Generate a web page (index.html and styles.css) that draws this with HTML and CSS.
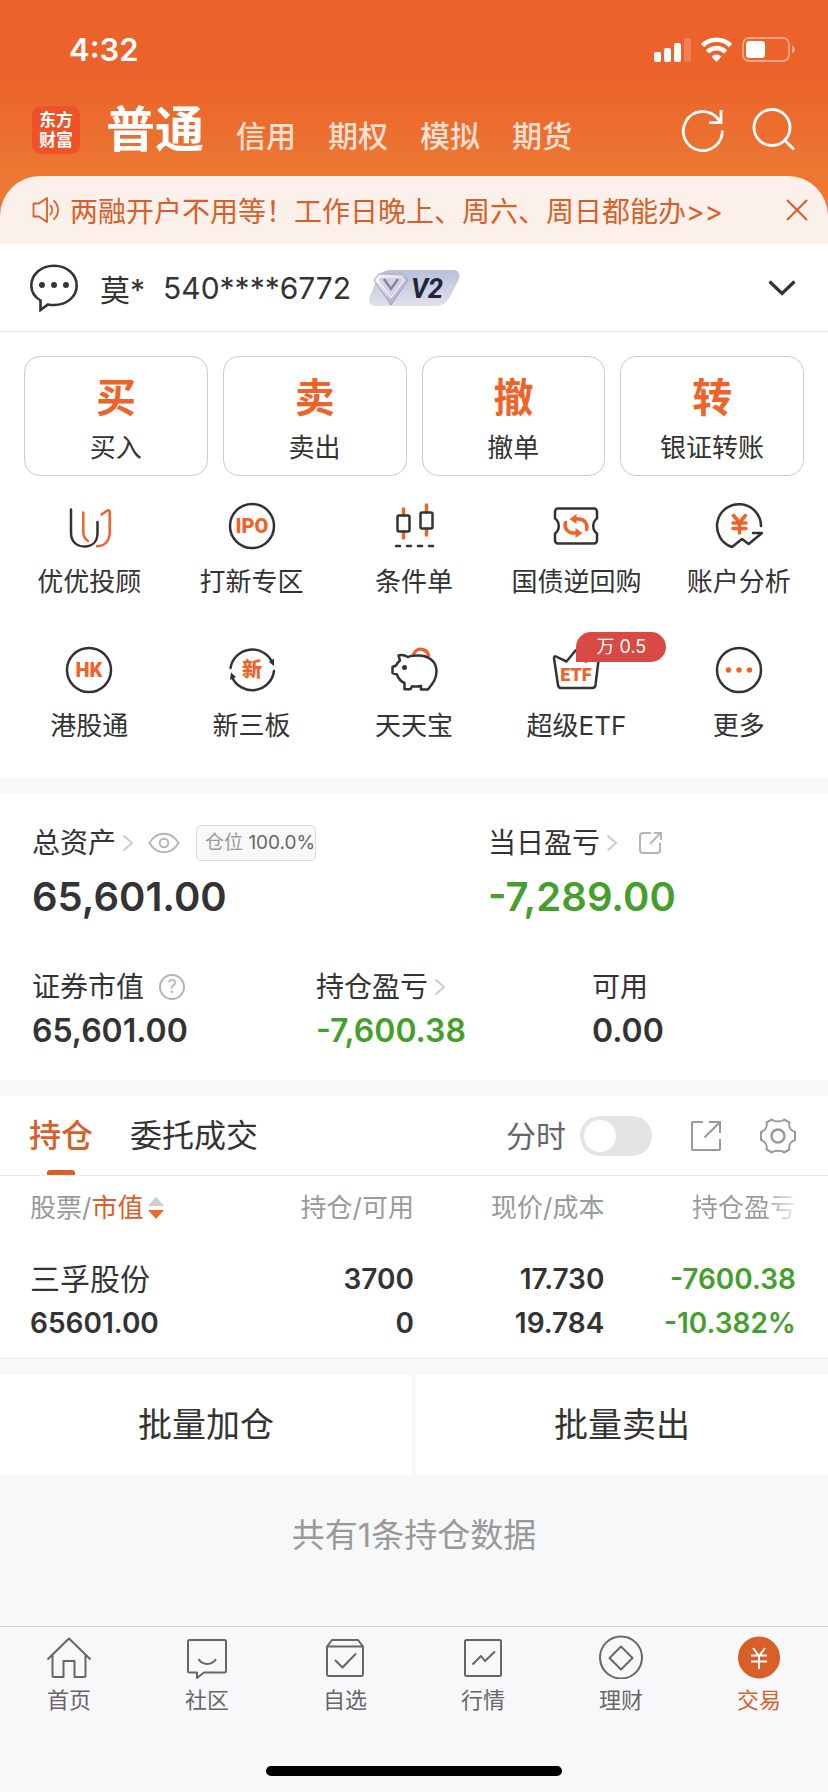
FILE: index.html
```html
<!DOCTYPE html>
<html lang="zh-CN">
<head>
    <meta charset="UTF-8">
    <meta name="viewport" content="width=device-width, initial-scale=1.0">
    <title>交易</title>
    <link rel="stylesheet" href="styles.css">
</head>
<body>
    <header class="header">
        <div class="status-bar">
            <span class="time">4:32</span>
            <svg class="status-icons" width="142" height="26" viewBox="0 0 142 26" fill="#fff">
                <rect x="0" y="15" width="7" height="10" rx="2"/>
                <rect x="10" y="11" width="7" height="14" rx="2"/>
                <rect x="20" y="6" width="7" height="19" rx="2"/>
                <rect x="30" y="1" width="7" height="24" rx="2" opacity=".2"/>
                <g fill="none" stroke="#fff" stroke-width="4.6">
                    <path d="M48.500 8.500a20 20 0 0 1 28 0"/>
                    <path d="M53.500 15a12.500 12.500 0 0 1 18 0"/>
                </g>
                <path d="M62.500 25l-5-5.500a7.500 7.500 0 0 1 10 0z"/>
                <rect x="89" y="1" width="46" height="23" rx="6" fill="none" stroke="#fff" stroke-width="1.800" opacity=".42"/>
                <rect x="92" y="4" width="19" height="17" rx="3.500"/>
                <path d="M138 8.500c4 1.500 4 6.500 0 8z" opacity=".45"/>
            </svg>
        </div>
        <div class="title-bar">
            <a class="logo" href="#">东方<br>财富</a>
            <nav class="modes">
                <a class="mode active" href="#">普通</a>
                <a class="mode" href="#">信用</a>
                <a class="mode" href="#">期权</a>
                <a class="mode" href="#">模拟</a>
                <a class="mode" href="#">期货</a>
            </nav>
            <button class="icon-btn" aria-label="刷新">
                <svg width="44" height="44" viewBox="0 0 44 44" fill="none" stroke="#fff" stroke-width="2.800">
                    <path d="M41.300 22.500A19.500 19.500 0 1 1 35.800 9.500L39 13"/>
                    <path d="M40 2v12.600H28"/>
                </svg>
            </button>
            <button class="icon-btn" aria-label="搜索">
                <svg width="44" height="44" viewBox="0 0 44 44" fill="none" stroke="#fff" stroke-width="2.800">
                    <circle cx="21" cy="19.500" r="18"/>
                    <path d="M33.500 32l9.500 9.500"/>
                </svg>
            </button>
        </div>
        <div class="notice">
            <svg width="28" height="28" viewBox="0 0 28 28" fill="none" stroke="#d85f28" stroke-width="1.800">
                <path d="M1.500 7.500h5.500l8-5.500v24l-8-5.500H1.500z" stroke-linejoin="round"/>
                <path d="M18 9c3 3 3 7 0 10M21.500 4.500c6 5 6 14 0 19"/>
            </svg>
            <a class="notice-text" href="#">两融开户不用等！工作日晚上、周六、周日都能办&gt;&gt;</a>
            <button class="close-btn" aria-label="关闭">
                <svg width="22" height="22" viewBox="0 0 22 22" stroke="#d85f28" stroke-width="2"><path d="M1 1l20 20M21 1L1 21"/></svg>
            </button>
        </div>
    </header>

    <main>
        <section class="account">
            <svg width="48" height="48" viewBox="0 0 48 48">
                <path d="M10.500 46V36.500C4.500 33 1.300 27.500 1.300 21.500 1.300 10.500 11 1.800 24 1.800s22.700 8.700 22.700 19.700S37 41 24 41c-2.500 0-4-.2-6-.6z" fill="none" stroke="#333" stroke-width="2.600"/>
                <g fill="#333"><circle cx="12" cy="21" r="3"/><circle cx="24" cy="21" r="3"/><circle cx="36" cy="21" r="3"/></g>
            </svg>
            <span class="name">莫*</span>
            <span class="number">540****6772</span>
            <svg class="level" width="92" height="36" viewBox="0 0 92 36">
                <defs>
                    <linearGradient id="lv" x1="0" y1="0" x2="0" y2="1">
                        <stop offset="0" stop-color="#b9c0da"/>
                        <stop offset="1" stop-color="#dfe1ea"/>
                    </linearGradient>
                    <linearGradient id="gem" x1="0" y1="0" x2="1" y2="1">
                        <stop offset="0" stop-color="#fff"/>
                        <stop offset="1" stop-color="#9d94bd"/>
                    </linearGradient>
                </defs>
                <path d="M22 0h62c6 0 8 5 5 11l-6 12c-4 9-9 13-17 13H6c-5 0-7-5-5-10L8 9C11 3 15 0 22 0z" fill="url(#lv)"/>
                <path d="M10 4h24l5 6-17 25L5 10z" fill="url(#gem)" stroke="#a19cb8" stroke-width="1"/>
                <path d="M12 7h20l3 3-13 18L9 10z" fill="#d3d1e3" stroke="#fff" stroke-width="1"/>
                <path d="M15 9l7 10 7-10" fill="none" stroke="#8481a3" stroke-width="2.400"/>
                <text class="level-text" x="42" y="28">V2</text>
            </svg>
            <button class="expand-btn" aria-label="展开">
                <svg width="28" height="18" viewBox="0 0 28 18" fill="none" stroke="#333" stroke-width="3.200"><path d="M1.500 2.500L14 14.500 26.500 2.500"/></svg>
            </button>
        </section>

        <section class="actions">
            <button class="action"><b>买</b><span>买入</span></button>
            <button class="action"><b>卖</b><span>卖出</span></button>
            <button class="action"><b>撤</b><span>撤单</span></button>
            <button class="action"><b>转</b><span>银证转账</span></button>
        </section>

        <section class="services">
            <a class="service" href="#">
                <svg class="line-icon" viewBox="0 0 48 48">
                    <path d="M6 7.500v23.500c0 8 5 13.500 13.500 13.500S32.500 39 32.500 31V20"/>
                    <path class="accent" d="M18.300 10.500V30c0 4 1.500 7 4.700 9M36.500 12.500L42 8.700c1.500-1 2.700-.3 2.700 1.300v20c0 9-5 14.200-12.700 14.200"/>
                </svg>
                <span>优优投顾</span>
            </a>
            <a class="service" href="#">
                <svg class="line-icon" viewBox="0 0 48 48">
                    <circle cx="24" cy="24" r="22"/>
                    <text x="24" y="31">IPO</text>
                </svg>
                <span>打新专区</span>
            </a>
            <a class="service" href="#">
                <svg class="line-icon" viewBox="0 0 48 48">
                    <path class="accent thick" d="M13.500 7v6M13.500 30v6M36.500 3v7M36.500 27v6"/>
                    <rect x="7.500" y="13.500" width="12" height="16" rx="1.500"/>
                    <rect x="30.500" y="10.500" width="12" height="16" rx="1.500"/>
                    <path d="M6 44h4M17 44h4M28 44h4M39 44h4"/>
                </svg>
                <span>条件单</span>
            </a>
            <a class="service" href="#">
                <svg class="line-icon" viewBox="0 0 48 48">
                    <path d="M6 6.500h36a3 3 0 0 1 3 3v7c-5 3.500-5 11.500 0 15v7a3 3 0 0 1-3 3H6a3 3 0 0 1-3-3v-7c5-3.500 5-11.500 0-15v-7a3 3 0 0 1 3-3z"/>
                    <path class="accent thick" d="M13.500 20.500c-1.500 5 1.500 10.500 8 10.500h4M34.500 27.500c1.500-5-1.500-10.500-8-10.500h-4"/>
                    <path class="fill" d="M24.500 12v10l-7-5zM23.500 26v10l7-5z"/>
                </svg>
                <span>国债逆回购</span>
            </a>
            <a class="service" href="#">
                <svg class="line-icon" viewBox="0 0 48 48">
                    <path d="M46 24A22 22 0 1 0 17 45l10-8 6.700 5L47 31h-9"/>
                    <path class="accent thick" d="M18.500 13.500l6 7 6-7M24.500 20.500V31M18 21h13M18 26.500h13"/>
                </svg>
                <span>账户分析</span>
            </a>
            <a class="service" href="#">
                <svg class="line-icon" viewBox="0 0 48 48">
                    <circle cx="24" cy="24" r="22"/>
                    <text x="24" y="31">HK</text>
                </svg>
                <span>港股通</span>
            </a>
            <a class="service" href="#">
                <svg class="line-icon" viewBox="0 0 48 48">
                    <path d="M2.500 22A22 22 0 0 1 44.500 17M46 25A22 22 0 0 1 4 31"/>
                    <path class="fill-dark" d="M41 16l5-3.500V20zM2 34l1-7.500L8 31z"/>
                    <text class="cjk" x="24" y="31">新</text>
                </svg>
                <span>新三板</span>
            </a>
            <a class="service" href="#">
                <svg class="line-icon" viewBox="0 0 48 48">
                    <path class="accent thick" d="M23.500 8.500c2-5 6-6 9-5 3.500.8 5.500 3 6 6"/>
                    <path d="M8.500 9.500c4-1.500 7 0 9.500 1.500 3-1.500 6-1.500 10-1.500 11 0 18.500 6 18.500 15.500 0 8-3.500 12-8.500 18.500h-7v-3.500c-3 .6-6 .6-9 .3l-1.500 3h-6V37C10 35 8 31.500 7 28.500l-4.500-1.500v-6l3.500-1.500c1-2 2-3.500 4-5z"/>
                    <circle class="fill-dark" cx="14.500" cy="21.500" r="2.500"/>
                </svg>
                <span>天天宝</span>
            </a>
            <a class="service" href="#">
                <svg class="line-icon" viewBox="0 0 48 48">
                    <path d="M2 12c0-1.500 1-2 2-1.500L14.500 15.500 24 4l9.500 11.500L45 10.500c1-.5 2 .5 1.800 1.500l-3.300 27c-.3 2-1.300 3-3 3H9c-1.700 0-2.700-1-3-3z"/>
                    <text class="small" x="24" y="35">ETF</text>
                </svg>
                <em class="badge">万 0.5</em>
                <span>超级ETF</span>
            </a>
            <a class="service" href="#">
                <svg class="line-icon" viewBox="0 0 48 48">
                    <circle cx="24" cy="24" r="22"/>
                    <g class="fill"><circle cx="13.500" cy="24" r="2.700"/><circle cx="24" cy="24" r="2.700"/><circle cx="34.500" cy="24" r="2.700"/></g>
                </svg>
                <span>更多</span>
            </a>
        </section>

        <section class="assets">
            <div class="asset-row total">
                <div class="asset">
                    <div class="asset-label">
                        <a href="#">总资产</a>
                        <svg class="arrow" viewBox="0 0 12 18"><path d="M1.500 1.500L10 9l-8.500 7.500"/></svg>
                        <button class="eye-btn" aria-label="隐藏资产">
                            <svg width="32" height="22" viewBox="0 0 32 22" fill="none" stroke="#b5b5b5" stroke-width="2">
                                <path d="M1.500 11C5 5 10 1.800 16 1.800S27 5 30.500 11C27 17 22 20.200 16 20.200S5 17 1.500 11z"/>
                                <circle cx="16" cy="11" r="4.300"/>
                            </svg>
                        </button>
                        <span class="position">仓位 <i>100.0%</i></span>
                    </div>
                    <div class="value">65,601.00</div>
                </div>
                <div class="asset">
                    <div class="asset-label">
                        <a href="#">当日盈亏</a>
                        <svg class="arrow" viewBox="0 0 12 18"><path d="M1.500 1.500L10 9l-8.500 7.500"/></svg>
                        <button class="share-btn" aria-label="分享">
                            <svg width="24" height="24" viewBox="0 0 24 24" fill="none" stroke="#b5b5b5" stroke-width="2">
                                <path d="M13 2H5a3 3 0 0 0-3 3v14a3 3 0 0 0 3 3h14a3 3 0 0 0 3-3v-7M16 2h7v7M22.500 2L12 13"/>
                            </svg>
                        </button>
                    </div>
                    <div class="value down">-7,289.00</div>
                </div>
            </div>
            <div class="asset-row detail">
                <div class="asset">
                    <div class="asset-label">
                        <span>证券市值</span>
                        <svg class="help" width="28" height="28" viewBox="0 0 28 28">
                            <circle cx="14" cy="14" r="12" fill="none" stroke="#b5b5b5" stroke-width="2"/>
                            <text x="14" y="20">?</text>
                        </svg>
                    </div>
                    <div class="value">65,601.00</div>
                </div>
                <div class="asset">
                    <div class="asset-label">
                        <a href="#">持仓盈亏</a>
                        <svg class="arrow" viewBox="0 0 12 18"><path d="M1.500 1.500L10 9l-8.500 7.500"/></svg>
                    </div>
                    <div class="value down">-7,600.38</div>
                </div>
                <div class="asset">
                    <div class="asset-label"><span>可用</span></div>
                    <div class="value">0.00</div>
                </div>
            </div>
        </section>

        <section class="holdings">
            <div class="tabs">
                <button class="tab active">持仓</button>
                <button class="tab">委托成交</button>
                <label class="minute" for="minute">分时</label>
                <input class="switch" type="checkbox" id="minute">
                <button class="tool" aria-label="导出">
                    <svg width="36" height="36" viewBox="0 0 36 36" fill="none" stroke="#999" stroke-width="2">
                        <path d="M15 4H5a1 1 0 0 0-1 1v26a1 1 0 0 0 1 1h26a1 1 0 0 0 1-1V21M21 4h11v11M32 4L16.500 19.500"/>
                    </svg>
                </button>
                <button class="tool" aria-label="设置">
                    <svg width="36" height="36" viewBox="0 0 36 36" fill="none" stroke="#999" stroke-width="2" stroke-linejoin="round">
                        <path d="M12 1.500c2 2.500 10 2.500 12 0l5.500 3c-1 4 1 8 5.500 9.500v8c-4.500 1.500-6.500 5.500-5.500 9.500L24 34.500c-2-2.500-10-2.500-12 0l-5.500-3c1-4-1-8-5.500-9.500v-8C5.500 12.500 7.500 8.500 6.500 4.500z"/>
                        <circle cx="18" cy="18" r="6.500" stroke-width="2.500"/>
                    </svg>
                </button>
            </div>
            <table class="stock-table">
                <thead>
                    <tr>
                        <th>股票/<span class="sorted">市值</span><svg class="sort" width="16" height="22" viewBox="0 0 16 22"><path d="M8 0l8 9H0z" fill="#ccc"/><path d="M8 22l8-9H0z" fill="#e96a2f"/></svg></th>
                        <th>持仓/可用</th>
                        <th>现价/成本</th>
                        <th><span class="fade">持仓盈亏</span></th>
                    </tr>
                </thead>
                <tbody>
                    <tr>
                        <td><span class="stock">三孚股份</span>65601.00</td>
                        <td>3700<br>0</td>
                        <td>17.730<br>19.784</td>
                        <td class="down">-7600.38<br>-10.382%</td>
                    </tr>
                </tbody>
            </table>
        </section>

        <div class="batch">
            <button>批量加仓</button>
            <button>批量卖出</button>
        </div>
        <p class="summary">共有1条持仓数据</p>
    </main>

    <footer class="footer">
        <nav class="tabbar">
            <a href="#">
                <svg class="nav-icon" viewBox="0 0 44 44"><path d="M.5 24.500L22 3.500l21.500 21M5.500 20v20.500a1.500 1.500 0 0 0 1.500 1.500h9.500V26h11v16H37a1.500 1.500 0 0 0 1.500-1.500V20"/></svg>
                <span>首页</span>
            </a>
            <a href="#">
                <svg class="nav-icon" viewBox="0 0 44 44"><path d="M4.500 5h35A1.500 1.500 0 0 1 41 6.500v29.500a1.500 1.500 0 0 1-1.500 1.500H19L12 43v-5.500H4.500A1.500 1.500 0 0 1 3 36V6.500A1.500 1.500 0 0 1 4.500 5zM13.500 24c4 6.500 13.500 6.500 17.500 0"/></svg>
                <span>社区</span>
            </a>
            <a href="#">
                <svg class="nav-icon" viewBox="0 0 44 44"><path d="M4 11.500h36V39a2 2 0 0 1-2 2H6a2 2 0 0 1-2-2zL9 5h26l5 6.500M12 25l7.500 7.500L33 18.500"/></svg>
                <span>自选</span>
            </a>
            <a href="#">
                <svg class="nav-icon" viewBox="0 0 44 44"><rect x="4" y="5" width="36" height="36" rx="1.500"/><path d="M11.500 29.500l8.500-8.500 4 5 10-9.500"/></svg>
                <span>行情</span>
            </a>
            <a href="#">
                <svg class="nav-icon" viewBox="0 0 44 44"><circle cx="22" cy="22.500" r="21"/><path d="M22 11.500l11.500 11.500L22 34.500 10.500 23z"/></svg>
                <span>理财</span>
            </a>
            <a class="active" href="#">
                <svg class="nav-icon" viewBox="0 0 44 44"><circle class="disc" cx="22" cy="22.500" r="20"/><path class="yen" d="M16 13l6 8 6-8M22 21v13M14 20.500h16M14 26.500h16"/></svg>
                <span>交易</span>
            </a>
        </nav>
        <div class="home-bar"></div>
    </footer>
</body>
</html>
```
FILE: styles.css
```css
* {
    box-sizing: border-box;
}
body {
    margin: 0;
    min-height: 100vh;
    display: flex;
    flex-direction: column;
    font-family: Inter, "Noto Sans CJK SC", sans-serif;
    font-size: 28px;
    color: #333;
    background-color: #f7f8fa;
}
a {
    color: inherit;
    text-decoration: none;
}
button {
    padding: 0;
    border: none;
    background: none;
    font: inherit;
    color: inherit;
}
svg {
    display: block;
    flex-shrink: 0;
}

/* header */
.header {
    background: linear-gradient(#eb622a 0, #eb622a 70px, #ec7833 176px);
}
.status-bar {
    display: flex;
    align-items: center;
    justify-content: space-between;
    height: 84px;
    padding: 16px 32px 0 69px;
}
.time {
    font-size: 31px;
    font-weight: 600;
    line-height: 40px;
    color: #fff;
}
.title-bar {
    display: flex;
    align-items: center;
    gap: 26px;
    height: 92px;
    padding: 0 33px 0 32px;
}
.logo {
    width: 48px;
    height: 48px;
    padding-top: 4px;
    border-radius: 9px;
    background-color: #ef5227;
    color: #fff;
    font-size: 17px;
    font-weight: 700;
    line-height: 20px;
    text-align: center;
}
.modes {
    flex: 1;
    display: flex;
    align-items: baseline;
    gap: 32px;
    padding-top: 6px;
}
.mode {
    font-size: 30px;
    font-weight: 500;
    line-height: 60px;
    color: rgba(255, 255, 255, 0.8);
}
.mode.active {
    font-size: 49px;
    font-weight: 700;
    color: #fff;
}
.notice {
    display: flex;
    align-items: center;
    height: 68px;
    padding: 0 20px 0 32px;
    border-radius: 40px 40px 0 0;
    background-color: #fcf0eb;
    color: #d85f28;
}
.notice-text {
    flex: 1;
    margin-left: 10px;
    white-space: nowrap;
}

/* account */
.account {
    display: flex;
    align-items: center;
    height: 88px;
    padding: 0 32px 0 30px;
    border-bottom: 1px solid #ebebeb;
    background-color: #fff;
    font-size: 30px;
}
.name {
    margin-left: 22px;
}
.number {
    margin: 0 18px;
}
.level-text {
    font-family: Roboto, sans-serif;
    font-size: 27px;
    font-weight: 700;
    font-style: italic;
    fill: #22263a;
}
.expand-btn {
    margin-left: auto;
}

/* buy, sell, cancel, transfer */
.actions {
    display: grid;
    grid-template-columns: repeat(4, 1fr);
    gap: 15px;
    padding: 24px 24px 0;
    background-color: #fff;
}
.action {
    display: flex;
    flex-direction: column;
    align-items: center;
    gap: 9px;
    height: 120px;
    padding-top: 18px;
    border: 1px solid #ccc;
    border-radius: 16px;
    font-size: 26px;
    line-height: 36px;
}
.action b {
    font-size: 40px;
    line-height: 46px;
    color: #ee6329;
}

/* services */
.services {
    display: grid;
    grid-template-columns: repeat(5, 1fr);
    row-gap: 46px;
    padding: 26px 8px 34px;
    background-color: #fff;
}
.service {
    position: relative;
    display: flex;
    flex-direction: column;
    align-items: center;
    gap: 14px;
    font-size: 26px;
    line-height: 36px;
    white-space: nowrap;
}
.line-icon {
    width: 48px;
    height: 48px;
    fill: none;
    stroke: #333;
    stroke-width: 2.5;
    stroke-linecap: round;
    stroke-linejoin: round;
}
.line-icon .accent {
    stroke: #ee6329;
}
.line-icon .thick {
    stroke-width: 3.5;
}
.line-icon .fill,
.line-icon text {
    fill: #ee6329;
    stroke: none;
}
.line-icon .fill-dark {
    fill: #333;
    stroke: none;
}
.line-icon text {
    font-family: Roboto, sans-serif;
    font-size: 20px;
    font-weight: 900;
    text-anchor: middle;
}
.line-icon .small {
    font-size: 18px;
}
.line-icon .cjk {
    font-family: "Noto Sans CJK SC", sans-serif;
}
.badge {
    position: absolute;
    top: -14px;
    left: 50%;
    width: 90px;
    border-radius: 15px 15px 15px 0;
    background-color: #d84a43;
    color: #fff;
    font-size: 18px;
    font-style: normal;
    line-height: 30px;
    text-align: center;
}

/* assets */
.assets {
    margin-top: 16px;
    padding: 27px 32px;
    background-color: #fff;
}
.asset-row {
    display: grid;
}
.total {
    grid-template-columns: 456fr 308fr;
    margin-bottom: 44px;
}
.detail {
    grid-template-columns: 284fr 276fr 204fr;
}
.asset-label {
    display: flex;
    align-items: center;
    height: 44px;
    line-height: 44px;
}
.arrow {
    width: 12px;
    height: 18px;
    margin-left: 6px;
    fill: none;
    stroke: #ccc;
    stroke-width: 2;
}
.eye-btn {
    margin-left: 14px;
}
.share-btn {
    margin-left: 20px;
}
.help {
    margin-left: 14px;
}
.help text {
    font-size: 18px;
    fill: #b5b5b5;
    text-anchor: middle;
}
.position {
    height: 36px;
    margin-left: 16px;
    padding-left: 8px;
    border: 1px solid #ddd;
    border-radius: 5px;
    background-color: #f8f8fb;
    color: #999;
    font-size: 19px;
    line-height: 34px;
}
.position i {
    font-style: normal;
    color: #666;
}
.value {
    font-size: 32px;
    font-weight: 600;
    line-height: 44px;
}
.total .value {
    margin-top: 8px;
    font-size: 40px;
    line-height: 48px;
}
.down {
    color: #469f2c;
}

/* holdings */
.holdings {
    margin-top: 16px;
    border-bottom: 1px solid #ebebeb;
    background-color: #fff;
}
.tabs {
    display: flex;
    align-items: center;
    height: 80px;
    padding: 0 32px 0 29px;
    border-bottom: 1px solid #ebebeb;
}
.tab {
    position: relative;
    height: 79px;
    margin-right: 37px;
    padding-bottom: 5px;
    font-size: 32px;
}
.tab.active {
    color: #d85f28;
    font-weight: 500;
}
.tab.active::after {
    content: "";
    position: absolute;
    bottom: 0;
    left: calc(50% - 14px);
    width: 28px;
    height: 5px;
    border-radius: 3px 3px 0 0;
    background-color: #d85f28;
}
.minute {
    margin-left: auto;
    padding-bottom: 4px;
    font-size: 30px;
    color: #666;
}
.switch {
    appearance: none;
    width: 72px;
    height: 40px;
    margin: 0 0 0 14px;
    padding: 4px;
    border-radius: 20px;
    background-color: #e4e4e6;
}
.switch::before {
    content: "";
    display: block;
    width: 32px;
    height: 32px;
    border-radius: 50%;
    background-color: #fff;
}
.tool {
    margin-left: 36px;
}
.stock-table {
    width: 100%;
    table-layout: fixed;
    border-collapse: collapse;
}
.stock-table th {
    height: 64px;
    padding: 0;
    font-size: 26px;
    font-weight: 400;
    line-height: 40px;
    color: #999;
    text-align: right;
}
.stock-table td {
    padding: 17px 0 13px;
    font-weight: 600;
    line-height: 44px;
    text-align: right;
}
.stock-table th:nth-child(1) {
    width: 30%;
}
.stock-table th:nth-child(2) {
    width: 20%;
}
.stock-table th:nth-child(3) {
    width: 23%;
}
.stock-table tr > :first-child {
    padding-left: 30px;
    text-align: left;
}
.stock-table tr > :last-child {
    padding-right: 32px;
}
.sorted {
    color: #d85f28;
}
.sort {
    display: inline-block;
    margin-left: 5px;
    vertical-align: -2px;
}
.fade {
    background: linear-gradient(90deg, #999 70%, #eee);
    background-clip: text;
    color: transparent;
}
.stock {
    display: block;
    font-size: 30px;
    font-weight: 400;
}

.batch {
    display: grid;
    grid-template-columns: 1fr 1fr;
    gap: 4px;
    margin-top: 16px;
}
.batch button {
    height: 100px;
    padding-bottom: 6px;
    background-color: #fff;
    font-size: 34px;
}
.summary {
    margin: 38px 0 36px;
    font-size: 33px;
    line-height: 44px;
    color: #999;
    text-align: center;
}

/* bottom navigation */
.footer {
    margin-top: auto;
    padding-bottom: 16px;
    border-top: 1px solid #d5d5d8;
    background-color: #f8f8fb;
}
.tabbar {
    display: grid;
    grid-template-columns: repeat(6, 1fr);
    padding-top: 8px;
}
.tabbar a {
    display: flex;
    flex-direction: column;
    align-items: center;
    gap: 6px;
    font-size: 22px;
    line-height: 30px;
    color: #666;
}
.tabbar .active {
    color: #d85f28;
}
.nav-icon {
    width: 44px;
    height: 44px;
    fill: none;
    stroke: #666;
    stroke-width: 2;
    stroke-linejoin: round;
}
.nav-icon .disc {
    fill: #d85f28;
    stroke: #d85f28;
}
.nav-icon .yen {
    stroke: #fff;
}
.home-bar {
    width: 296px;
    height: 10px;
    margin: 51px auto 0;
    border-radius: 5px;
    background-color: #000;
}
```
